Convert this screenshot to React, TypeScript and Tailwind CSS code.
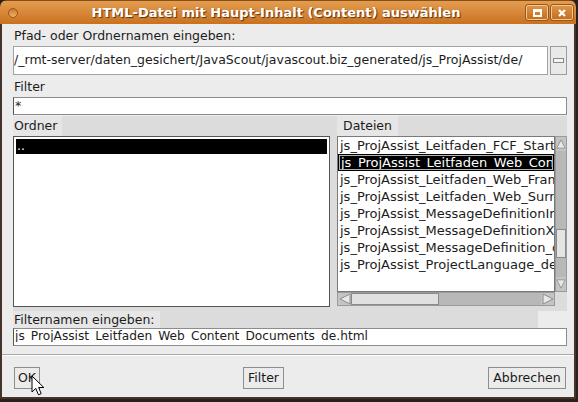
import React from "react";

const files = [
  "js_ProjAssist_Leitfaden_FCF_Start_de.html",
  "js_ProjAssist_Leitfaden_Web_Content_Documents_de.html",
  "js_ProjAssist_Leitfaden_Web_Frameset_de.html",
  "js_ProjAssist_Leitfaden_Web_Surrounding_de.html",
  "js_ProjAssist_MessageDefinitionImport_de.html",
  "js_ProjAssist_MessageDefinitionXML_de.html",
  "js_ProjAssist_MessageDefinition_de.html",
  "js_ProjAssist_ProjectLanguage_de.html",
];

function Arrow({ dir }: { dir: "up" | "down" | "left" | "right" }) {
  const pts = {
    up: "1,11 6,1 11,11",
    down: "1,1 6,11 11,1",
    left: "11,1 1,6 11,11",
    right: "1,1 11,6 1,11",
  }[dir];
  return (
    <svg width="12" height="12" viewBox="0 0 12 12">
      <polygon points={pts} fill="#e8e8e8" stroke="#8c8c8c" strokeWidth="1" />
    </svg>
  );
}

function Button({ label, className }: { label: string; className: string }) {
  return (
    <div
      className={`h-[22px] flex items-center justify-center bg-[#ebebeb] border border-[#8e8e8e] text-[12.5px] text-[#1a1a1a] ${className}`}
    >
      {label}
    </div>
  );
}

export default function App() {
  return (
    <div className="w-[578px] h-[402px] bg-[#2a2020] overflow-hidden relative font-['DejaVu_Sans',sans-serif]">
      <div className="w-[576px] h-[399px] flex flex-col rounded-t-[7px] overflow-hidden">
        {/* Title bar */}
        <div className="h-[24px] flex items-center bg-gradient-to-b from-[#e39d4f] to-[#c9721f] border-t border-[#8a4e16]">
          <div className="w-[26px] flex justify-center">
            <div className="w-[10px] h-[10px] rounded-full bg-gradient-to-b from-[#c87a2c] to-[#f0b06a] border border-[#9a5618]" />
          </div>
          <div className="flex-1 text-center text-white font-bold text-[13px] [text-shadow:1px_1px_1px_#5a3008]">
            HTML-Datei mit Haupt-Inhalt (Content) auswählen
          </div>
          <div className="flex gap-[3px] pr-[3px]">
            <div className="w-[22px] h-[15px] flex items-center justify-center border border-[#f3c98f] outline outline-1 outline-[#9a5618] rounded-[2px] bg-gradient-to-b from-[#dd9444] to-[#c46f21]">
              <div className="w-[9px] h-[8px] border-2 border-t-[3px] border-white" />
            </div>
            <div className="w-[22px] h-[15px] flex items-center justify-center border border-[#f3c98f] outline outline-1 outline-[#9a5618] rounded-[2px] bg-gradient-to-b from-[#dd9444] to-[#c46f21]">
              <svg width="10" height="10" viewBox="0 0 10 10">
                <path d="M2 2 L8 8 M8 2 L2 8" stroke="white" strokeWidth="2.2" />
              </svg>
            </div>
          </div>
        </div>

        {/* Body */}
        <div className="flex-1 flex flex-col bg-[#ececec] border-x-2 border-b-2 border-[#45332c] text-[12.5px] text-[#1c1c1c]">
          <div className="flex flex-col pl-[11px] pr-[7px]">
            <div className="mt-[3px] h-[17px] leading-[17px] pl-[1px]">Pfad- oder Ordnernamen eingeben:</div>
            <div className="mt-[2px] h-[29px] flex gap-[2px]">
              <div className="flex-1 bg-white border border-[#a2a2a2] flex items-center overflow-hidden whitespace-nowrap">
                /_rmt-server/daten_gesichert/JavaScout/javascout.biz_generated/js_ProjAssist/de/
              </div>
              <div className="w-[17px] bg-[#e9e9e9] border border-[#9c9c9c] flex items-center justify-center">
                <div className="w-[11px] h-[5px] border border-[#8a8a8a] bg-[#f4f4f4]" />
              </div>
            </div>

            <div className="mt-[3px] h-[18px] leading-[18px] pl-[1px]">Filter</div>
            <div className="mt-[1px] h-[18px] bg-white border border-[#8c8c8c] border-l-[#555] leading-[16px] pl-[1px]">*</div>

            {/* Lists */}
            <div className="mt-[1px] h-[195px] flex gap-[7px] bg-[#dcdcdc]">
              <div className="w-[317px] flex flex-col">
                <div className="h-[20px] flex">
                  <div className="w-[49px] bg-[#e6e6e6] leading-[20px] pl-[1px]">Ordner</div>
                </div>
                <div className="h-[171px] bg-white border border-[#555] p-[2px]">
                  <div className="h-[15px] bg-black text-white leading-[14px] pl-[1px]">..</div>
                </div>
              </div>

              <div className="flex-1 flex flex-col">
                <div className="h-[20px] flex">
                  <div className="w-[61px] bg-[#e6e6e6] leading-[20px] pl-[6px]">Dateien</div>
                </div>
                <div className="h-[156px] flex">
                  <div className="w-[218px] bg-white border border-[#7a7a7a] overflow-hidden text-[13px]">
                    {files.map((f, i) =>
                      i === 1 ? (
                        <div key={f} className="h-[17px] bg-black border border-black">
                          <div className="h-full border border-white/70 text-white leading-[13px] pl-[1px] whitespace-nowrap overflow-hidden">
                            {f}
                          </div>
                        </div>
                      ) : (
                        <div key={f} className="h-[17px] leading-[17px] pl-[2px] whitespace-nowrap overflow-hidden">
                          {f}
                        </div>
                      )
                    )}
                  </div>
                  <div className="w-[12px] flex flex-col bg-[#b8b8b8] border border-[#9a9a9a]">
                    <div className="h-[14px] flex items-center justify-center bg-[#c4c4c4]">
                      <Arrow dir="up" />
                    </div>
                    <div className="flex-1">
                      <div className="mt-[78px] h-[29px] bg-[#e4e4e4] border border-[#8a8a8a]" />
                    </div>
                    <div className="h-[14px] flex items-center justify-center bg-[#c4c4c4]">
                      <Arrow dir="down" />
                    </div>
                  </div>
                </div>
                <div className="w-[218px] h-[14px] flex bg-[#b8b8b8] border border-[#9a9a9a]">
                  <div className="w-[13px] flex items-center justify-center bg-[#c4c4c4]">
                    <Arrow dir="left" />
                  </div>
                  <div className="w-[88px] bg-[#e0e0e0] border border-[#8a8a8a]" />
                  <div className="flex-1" />
                  <div className="w-[13px] flex items-center justify-center bg-[#c4c4c4]">
                    <Arrow dir="right" />
                  </div>
                </div>
              </div>
            </div>

            <div className="h-[17px] flex">
              <div className="w-[525px] flex bg-[#dcdcdc]">
                <div className="w-[147px] bg-[#e6e6e6] leading-[17px] pl-[1px]">Filternamen eingeben:</div>
              </div>
            </div>
            <div className="h-[18px] bg-white border border-[#8c8c8c] border-l-[#555] pl-[1px] overflow-hidden">
              <div className="h-[13px] overflow-hidden leading-[15px] whitespace-nowrap text-[12.2px]">
                js_ProjAssist_Leitfaden_Web_Content_Documents_de.html
              </div>
            </div>
          </div>

          <div className="mt-[8px] h-[2px] border-t border-[#a9a9a9] border-b border-b-white" />

          <div className="mt-[11px] flex pl-[12px] pr-[8px] relative">
            <Button label="OK" className="w-[26px]" />
            <Button label="Filter" className="w-[41px] ml-[203px]" />
            <Button label="Abbrechen" className="w-[78px] ml-auto" />
            <svg
              className="absolute left-[29px] top-[8px]"
              width="14"
              height="22"
              viewBox="0 0 14 22"
            >
              <path
                d="M1 1 L1 17 L4.8 13.4 L7.5 19.8 L10.2 18.7 L7.6 12.5 L12.8 12.5 Z"
                fill="white"
                stroke="black"
                strokeWidth="1"
                strokeLinejoin="round"
              />
            </svg>
          </div>
        </div>
      </div>
    </div>
  );
}
